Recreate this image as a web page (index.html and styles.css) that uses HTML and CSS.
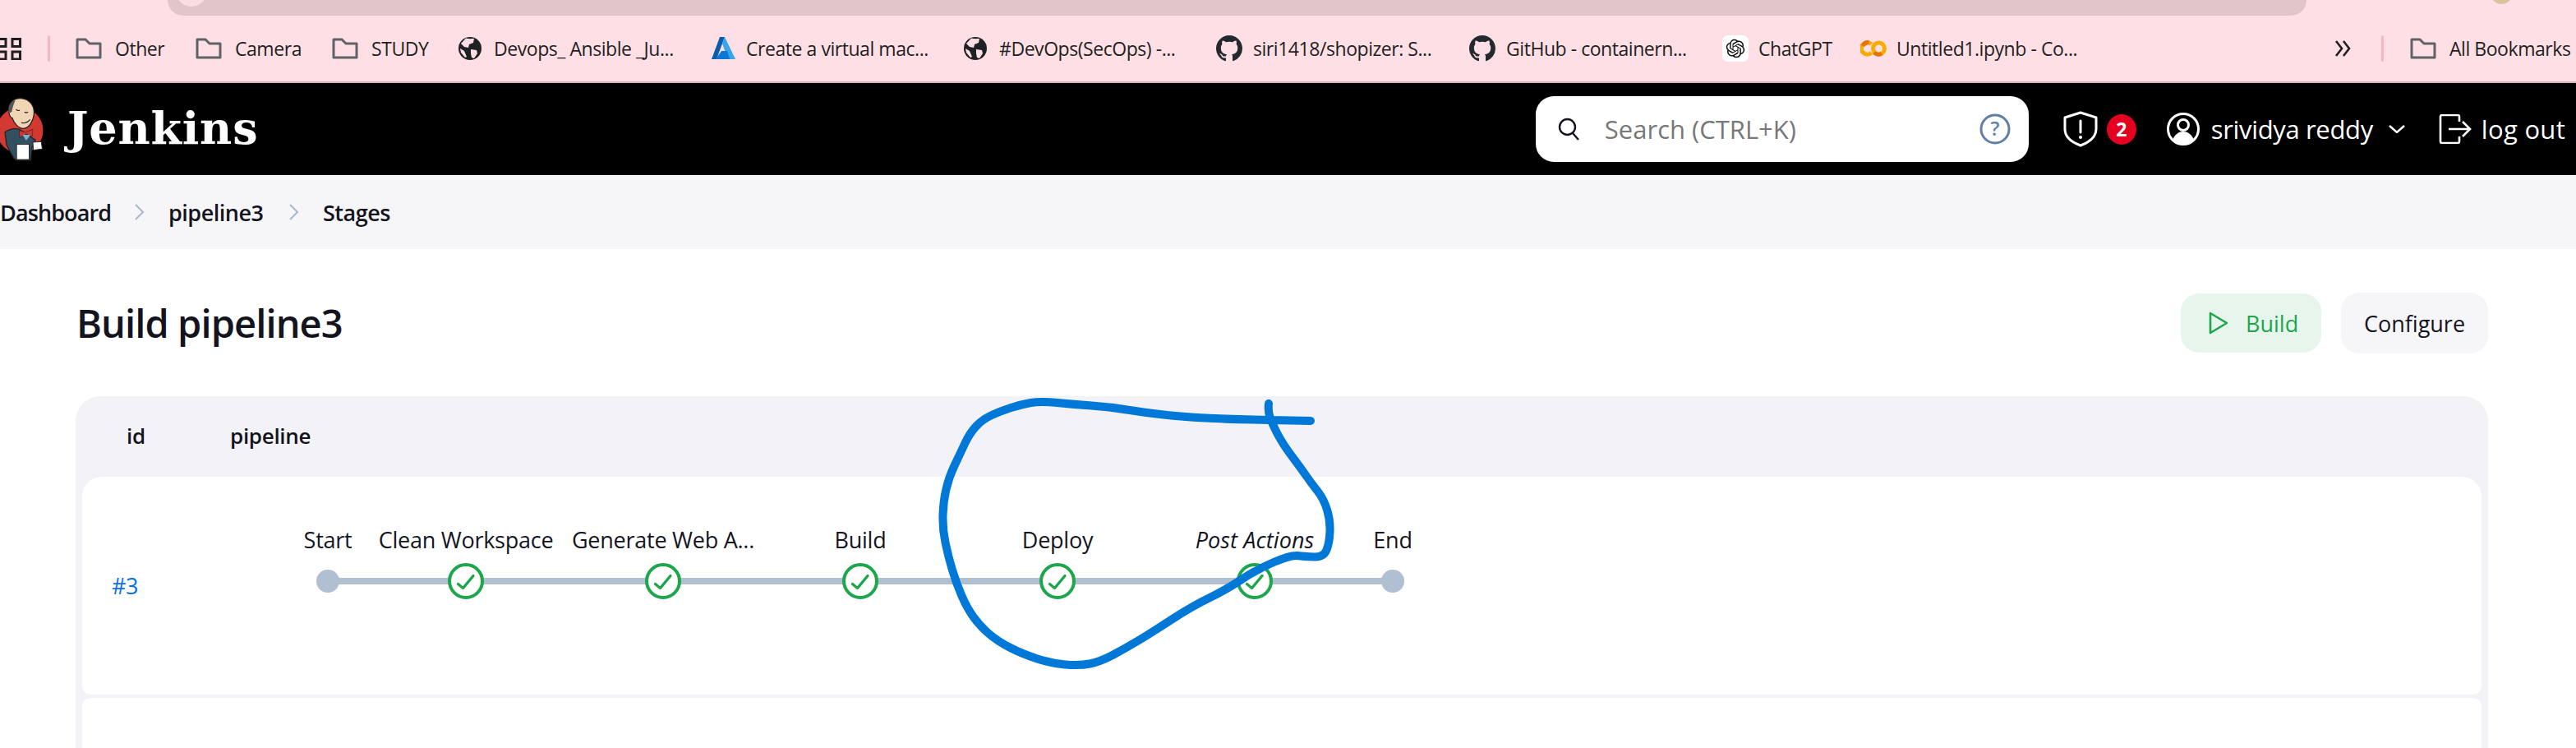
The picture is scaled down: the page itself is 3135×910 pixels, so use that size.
FILE: index.html
```html
<!DOCTYPE html>
<html lang="en">
<head>
<meta charset="utf-8">
<title>Build pipeline3 - Jenkins</title>
<link rel="stylesheet" href="styles.css">
</head>
<body>
<div class="chrome">
  <div class="omnibox"><span class="omni-dot"></span></div>
  <span class="avatar"></span>
  <nav class="bookmarks">
    <svg class="apps" viewBox="0 0 26 27"><g fill="none" stroke="#1f1f1f" stroke-width="3"><rect x="-3" y="1.5" width="10" height="9"/><rect x="15" y="1.5" width="9.500" height="9"/><rect x="-3" y="17" width="10" height="9"/><rect x="15" y="17" width="9.500" height="9"/></g></svg>
    <span class="sep"></span>
    <a class="bm"><svg class="folder" viewBox="0 0 32 26"><path d="M2 24V2h10l5 5h13v17z"/></svg><span>Other</span></a>
    <a class="bm"><svg class="folder" viewBox="0 0 32 26"><path d="M2 24V2h10l5 5h13v17z"/></svg><span>Camera</span></a>
    <a class="bm"><svg class="folder" viewBox="0 0 32 26"><path d="M2 24V2h10l5 5h13v17z"/></svg><span>STUDY</span></a>
    <a class="bm"><svg class="globe" viewBox="0 0 28 28"><circle cx="14" cy="14" r="14" fill="#202124"/><path d="M9 1.500c3 1 8 .5 10 .5l-1 5-5 2-1 4-5-1-4-4zM15 15l7 1 1 4-4 6-3-1-1-5zM2 14l5 3 3 7-2 1-5-6z" fill="#fedfe5"/></svg><span>Devops_ Ansible _Ju...</span></a>
    <a class="bm"><svg class="azure" viewBox="0 0 29 28"><path d="M10 0h6L6 27H0z" fill="#0a5cab"/><path d="M16 0l13 27h-9L13 8z" fill="#35a6e8"/><path d="M12 17h7l3 10H5z" fill="#0a78d4"/></svg><span>Create a virtual mac...</span></a>
    <a class="bm"><svg class="globe" viewBox="0 0 28 28"><circle cx="14" cy="14" r="14" fill="#202124"/><path d="M9 1.500c3 1 8 .5 10 .5l-1 5-5 2-1 4-5-1-4-4zM15 15l7 1 1 4-4 6-3-1-1-5zM2 14l5 3 3 7-2 1-5-6z" fill="#fedfe5"/></svg><span>#DevOps(SecOps) -...</span></a>
    <a class="bm"><svg class="gh" viewBox="0 0 16 16"><path d="M8 0C3.580 0 0 3.580 0 8c0 3.540 2.290 6.530 5.470 7.590.4.070.55-.17.55-.38 0-.19-.01-.82-.01-1.490-2.010.37-2.530-.49-2.690-.94-.09-.23-.48-.94-.82-1.130-.28-.15-.68-.52-.01-.53.63-.01 1.080.58 1.230.82.72 1.210 1.870.87 2.330.66.070-.52.28-.87.51-1.070-1.780-.2-3.640-.89-3.640-3.950 0-.87.31-1.590.82-2.150-.08-.2-.36-1.020.08-2.120 0 0 .67-.21 2.200.82.64-.18 1.320-.27 2-.27.68 0 1.360.09 2 .27 1.530-1.040 2.200-.82 2.200-.82.44 1.100.16 1.920.08 2.120.51.56.82 1.270.82 2.150 0 3.070-1.870 3.750-3.650 3.950.29.25.54.73.54 1.480 0 1.070-.01 1.930-.01 2.200 0 .21.15.46.55.38A8.013 8.013 0 0016 8c0-4.420-3.580-8-8-8z"/></svg><span>siri1418/shopizer: S...</span></a>
    <a class="bm"><svg class="gh" viewBox="0 0 16 16"><path d="M8 0C3.580 0 0 3.580 0 8c0 3.540 2.290 6.530 5.470 7.590.4.070.55-.17.55-.38 0-.19-.01-.82-.01-1.490-2.010.37-2.530-.49-2.690-.94-.09-.23-.48-.94-.82-1.130-.28-.15-.68-.52-.01-.53.63-.01 1.080.58 1.230.82.72 1.210 1.870.87 2.330.66.070-.52.28-.87.51-1.070-1.780-.2-3.640-.89-3.640-3.950 0-.87.31-1.590.82-2.150-.08-.2-.36-1.020.08-2.120 0 0 .67-.21 2.200.82.64-.18 1.320-.27 2-.27.68 0 1.360.09 2 .27 1.530-1.040 2.200-.82 2.200-.82.44 1.100.16 1.920.08 2.120.51.56.82 1.270.82 2.150 0 3.070-1.870 3.750-3.650 3.950.29.25.54.73.54 1.480 0 1.070-.01 1.930-.01 2.200 0 .21.15.46.55.38A8.013 8.013 0 0016 8c0-4.420-3.580-8-8-8z"/></svg><span>GitHub - containern...</span></a>
    <a class="bm"><svg class="gpt" viewBox="-5 -5 34 34"><rect x="-5" y="-5" width="34" height="34" rx="7" fill="#fff"/><path fill="#111" d="M22.2819 9.8211a5.9847 5.9847 0 0 0-.5157-4.9108 6.0462 6.0462 0 0 0-6.5098-2.9A6.0651 6.0651 0 0 0 4.9807 4.1818a5.9847 5.9847 0 0 0-3.9977 2.9 6.0462 6.0462 0 0 0 .7427 7.0966 5.98 5.98 0 0 0 .511 4.9107 6.051 6.051 0 0 0 6.5146 2.9001A5.9847 5.9847 0 0 0 13.2599 24a6.0557 6.0557 0 0 0 5.7718-4.2058 5.9894 5.9894 0 0 0 3.9977-2.9001 6.0557 6.0557 0 0 0-.7475-7.0729zm-9.022 12.6081a4.4755 4.4755 0 0 1-2.8764-1.0408l.1419-.0804 4.7783-2.7582a.7948.7948 0 0 0 .3927-.6813v-6.7369l2.02 1.1686a.071.071 0 0 1 .038.052v5.5826a4.504 4.504 0 0 1-4.4945 4.4944zm-9.6607-4.1254a4.4708 4.4708 0 0 1-.5346-3.0137l.142.0852 4.783 2.7582a.7712.7712 0 0 0 .7806 0l5.8428-3.3685v2.3324a.0804.0804 0 0 1-.0332.0615L9.74 19.9502a4.4992 4.4992 0 0 1-6.1408-1.6464zM2.3408 7.8956a4.485 4.485 0 0 1 2.3655-1.9728V11.6a.7664.7664 0 0 0 .3879.6765l5.8144 3.3543-2.0201 1.1685a.0757.0757 0 0 1-.071 0l-4.8303-2.7865A4.504 4.504 0 0 1 2.3408 7.872zm16.5963 3.8558L13.1038 8.364 15.1192 7.2a.0757.0757 0 0 1 .071 0l4.8303 2.7913a4.4944 4.4944 0 0 1-.6765 8.1042v-5.6772a.79.79 0 0 0-.407-.667zm2.0107-3.0231l-.142-.0852-4.7735-2.7818a.7759.7759 0 0 0-.7854 0L9.409 9.2297V6.8974a.0662.0662 0 0 1 .0284-.0615l4.8303-2.7866a4.4992 4.4992 0 0 1 6.6802 4.66zM8.3065 12.863l-2.02-1.1638a.0804.0804 0 0 1-.038-.0567V6.0742a4.4992 4.4992 0 0 1 7.3757-3.4537l-.142.0805L8.704 5.459a.7948.7948 0 0 0-.3927.6813zm1.0976-2.3654l2.602-1.4998 2.6069 1.4998v2.9994l-2.5974 1.4997-2.6067-1.4997Z"/></svg><span>ChatGPT</span></a>
    <a class="bm"><svg class="colab" viewBox="0 0 32 20"><g fill="none" stroke-width="5"><path d="M13.500 4.800A7.200 7.200 0 1 0 13.500 15.200" stroke="#f9ab00"/><circle cx="22.500" cy="10" r="7" stroke="#f9ab00"/><path d="M10.500 2.700A7.200 7.200 0 0 0 3 7" stroke="#e8710a"/><path d="M26 16a7 7 0 0 1-9-1" stroke="#e8710a"/></g></svg><span>Untitled1.ipynb - Co...</span></a>
    <svg class="more" viewBox="0 0 22 24"><path d="M3 3l7 9-7 9M12 3l7 9-7 9" fill="none" stroke="#1f1f1f" stroke-width="2.600"/></svg>
    <span class="sep"></span>
    <a class="bm"><svg class="folder" viewBox="0 0 32 26"><path d="M2 24V2h10l5 5h13v17z"/></svg><span>All Bookmarks</span></a>
  </nav>
</div>

<header class="jenkins-head">
  <svg class="butler" viewBox="0 75 170 250">
    <circle cx="75" cy="205" r="88" fill="#d33833"/>
    <path d="M18 212c20-14 40-15 56-10l60 40-14 30-4 46H62l-10-6-28-52z" fill="#335061" stroke="#222" stroke-width="4"/>
    <path d="M34 130c-6-30 20-50 50-46 30 4 48 30 44 62-3 22-18 52-40 52-18 0-36-20-42-40-8 0-14-14-12-28z" fill="#f0d6b5" stroke="#222" stroke-width="4"/>
    <path d="M34 140c-8-24 6-44 24-50-8 16-12 34-14 44z" fill="#55555c"/>
    <path d="M92 135q8 6 14 0M60 126q8 6 14 2M80 176q18 6 34-12" fill="none" stroke="#222" stroke-width="3.500"/>
    <path d="M72 205l24 8 28-12-2 26-24-8-24 14z" fill="#d33833" stroke="#222" stroke-width="2"/>
    <path d="M85 222l30 0-16 22z" fill="#7fb2d0"/>
    <rect x="62" y="258" width="48" height="58" fill="#fff" stroke="#222" stroke-width="3"/>
    <path d="M124 250l32-2 4 28-34 4z" fill="#fff" stroke="#222" stroke-width="3"/>
  </svg>
  <span class="wordmark">Jenkins</span>
  <div class="search">
    <svg class="search-ico" viewBox="0 0 28 28"><circle cx="12.500" cy="11.500" r="9.500" fill="none" stroke="#14141f" stroke-width="2.400"/><path d="M19 19l7 8" stroke="#14141f" stroke-width="2.400"/></svg>
    <span class="search-text">Search (CTRL+K)</span>
    <svg class="help" viewBox="0 0 38 38"><circle cx="19" cy="19" r="17" fill="none" stroke="#6080a8" stroke-width="3"/><text x="19" y="27" text-anchor="middle" class="help-q">?</text></svg>
  </div>
  <svg class="shield" viewBox="0 0 44 44"><path d="M22 2l19 6v14c0 10-8 16-19 20C11 38 3 32 3 22V8z" fill="none" stroke="#fff" stroke-width="3" stroke-linejoin="round"/><path d="M22 12v14" stroke="#fff" stroke-width="3" stroke-linecap="round"/><circle cx="22" cy="32" r="2" fill="#fff"/></svg>
  <span class="badge">2</span>
  <svg class="user" viewBox="0 0 40 40"><circle cx="20" cy="20" r="18.500" fill="none" stroke="#fff" stroke-width="3"/><circle cx="20" cy="15" r="6.500" fill="none" stroke="#fff" stroke-width="3"/><path d="M7 33c3-7 8-10 13-10s10 3 13 10c-7 7-19 7-26 0z" fill="#fff"/></svg>
  <span class="user-name">srividya reddy</span>
  <svg class="caret" viewBox="0 0 20 10"><path d="M1 1l9 8 9-8" fill="none" stroke="#fff" stroke-width="2.400"/></svg>
  <svg class="logout" viewBox="0 0 40 36"><path d="M25 9V3a2 2 0 0 0-2-2H4a2 2 0 0 0-2 2v30a2 2 0 0 0 2 2h19a2 2 0 0 0 2-2v-6" fill="none" stroke="#fff" stroke-width="2.600"/><path d="M12 18h26M29 9l9 9-9 9" fill="none" stroke="#fff" stroke-width="2.600"/></svg>
  <span class="logout-text">log out</span>
</header>

<nav class="crumbs">
  <a class="crumb-a">Dashboard</a>
  <svg class="crumb-sep" viewBox="0 0 13 20"><path d="M2 1l9 9-9 9" fill="none" stroke="#a9b8cc" stroke-width="2"/></svg>
  <a class="crumb-b">pipeline3</a>
  <svg class="crumb-sep" viewBox="0 0 13 20"><path d="M2 1l9 9-9 9" fill="none" stroke="#a9b8cc" stroke-width="2"/></svg>
  <a>Stages</a>
</nav>

<main class="content">
  <div class="title-row">
    <h1>Build pipeline3</h1>
    <div class="actions">
      <a class="btn btn-build"><svg class="play" viewBox="0 0 24 28"><path d="M2 2l20 12L2 26z" fill="none" stroke="#1ea64c" stroke-width="2.600" stroke-linejoin="round"/></svg>Build</a>
      <a class="btn btn-config">Configure</a>
    </div>
  </div>
  <section class="table">
    <div class="thead"><span class="th-id">id</span><span>pipeline</span></div>
    <div class="row">
      <a class="run-id">#3</a>
      <div class="graph">
        <span class="track"></span>
        <div class="stage edge"><span class="label">Start</span><span class="dot"></span></div>
        <div class="stage"><span class="label">Clean Workspace</span><svg class="ok" viewBox="0 0 44 44"><circle cx="22" cy="22" r="20"/><path d="M12.500 25.500l6 5 12.500-15"/></svg></div>
        <div class="stage"><span class="label">Generate Web A...</span><svg class="ok" viewBox="0 0 44 44"><circle cx="22" cy="22" r="20"/><path d="M12.500 25.500l6 5 12.500-15"/></svg></div>
        <div class="stage"><span class="label">Build</span><svg class="ok" viewBox="0 0 44 44"><circle cx="22" cy="22" r="20"/><path d="M12.500 25.500l6 5 12.500-15"/></svg></div>
        <div class="stage"><span class="label">Deploy</span><svg class="ok" viewBox="0 0 44 44"><circle cx="22" cy="22" r="20"/><path d="M12.500 25.500l6 5 12.500-15"/></svg></div>
        <div class="stage"><span class="label label-post">Post Actions</span><svg class="ok" viewBox="0 0 44 44"><circle cx="22" cy="22" r="20"/><path d="M12.500 25.500l6 5 12.500-15"/></svg></div>
        <div class="stage edge"><span class="label">End</span><span class="dot"></span></div>
      </div>
    </div>
    <div class="row row-next"></div>
  </section>
</main>

<svg class="scribble" viewBox="0 0 3135 910"><path d="M1595 512L1546 511Q1493 510 1466 508.500Q1439 507 1416 504.500Q1393 502 1371.500 498.500Q1350 495 1328.500 493.500Q1307 492 1286.500 490Q1266 488 1254.500 490Q1243 492 1230.500 496Q1218 500 1207 505Q1196 510 1188 518.500Q1180 527 1174 540Q1168 553 1161.500 566.500Q1155 580 1151.500 595Q1148 610 1147.500 626.500Q1147 643 1150.500 660Q1154 677 1159 693.500Q1164 710 1170.500 725Q1177 740 1185 751Q1193 762 1203.500 771Q1214 780 1228.500 787.500Q1243 795 1261 801Q1279 807 1296.500 808.500Q1314 810 1326.500 807.500Q1339 805 1355 796.500Q1371 788 1387.500 778Q1404 768 1427 753Q1450 738 1471.500 727.500Q1493 717 1511 705Q1529 693 1550 684Q1571 675 1579 676Q1587 677 1599 677.500Q1611 678 1614.500 669Q1618 660 1618.500 646.500Q1619 633 1615 620Q1611 607 1603.500 597.500Q1596 588 1589 578Q1582 568 1571.500 554Q1561 540 1554.500 527.500Q1548 515 1545.500 507.500Q1543 500 1544 491"/></svg>
</body>
</html>
```

FILE: styles.css
```css
* { box-sizing: border-box; }
html, body { margin: 0; padding: 0; }
body {
  position: relative;
  width: 3135px;
  height: 910px;
  overflow: hidden;
  background: #fff;
  color: #14141f;
  font-family: "Open Sans", "Noto Sans", sans-serif;
}
a { color: inherit; text-decoration: none; }

/* browser chrome */
.chrome {
  height: 101px;
  background: #fedfe5;
  border-bottom: 2px solid #d9b5bd;
}
.omnibox {
  height: 19px;
  margin: 0 328px 0 204px;
  background: #e1c5c9;
  border-radius: 0 0 26px 26px;
  padding-left: 10px;
  overflow: hidden;
}
.omni-dot {
  display: block;
  width: 38px;
  height: 38px;
  margin-top: -30px;
  border-radius: 50%;
  background: #f9dde1;
}
.avatar {
  position: absolute;
  left: 3031px;
  top: -22px;
  width: 27px;
  height: 27px;
  border-radius: 50%;
  background: #dcc29c;
}
.bookmarks {
  display: grid;
  grid-template-columns: 58px 34px 146px 166px 154px 308px 307px 307px 308px 308px 168px 576px 58px 35px 202px;
  align-items: center;
  height: 32px;
  margin-top: 24px;
  color: #1f1f1f;
  font-size: 23px;
  letter-spacing: -0.45px;
  white-space: nowrap;
}
.apps { width: 26px; height: 27px; display: block; }
.sep { display: block; width: 3px; height: 32px; background: #f7b6c2; border-radius: 2px; }
.bm { display: flex; align-items: center; height: 32px; }
.folder { width: 32px; height: 26px; margin-right: 16px; flex: none; }
.folder path { fill: none; stroke: #5f6368; stroke-width: 3; stroke-linejoin: round; }
.globe { width: 28px; height: 28px; margin-right: 15px; flex: none; }
.azure { width: 29px; height: 28px; margin-right: 13px; flex: none; }
.gh { width: 32px; height: 32px; margin-right: 13px; flex: none; fill: #24292f; }
.gpt { width: 32px; height: 32px; margin-right: 12px; flex: none; }
.colab { width: 32px; height: 20px; margin-right: 12px; flex: none; }
.more { width: 22px; height: 24px; }

/* jenkins header */
.jenkins-head {
  display: flex;
  align-items: center;
  height: 112px;
  background: #000;
  color: #fff;
  padding-right: 13px;
}
.butler { width: 55px; height: 80px; flex: none; }
.wordmark {
  margin-left: 27px;
  font-family: "DejaVu Serif", "Liberation Serif", serif;
  font-weight: 700;
  font-size: 54px;
  letter-spacing: 0.800px;
  line-height: 1;
  margin-top: -2px;
}
.search {
  display: flex;
  align-items: center;
  width: 600px;
  height: 80px;
  margin-left: auto;
  padding: 0 22px 0 26px;
  background: #fff;
  border-radius: 22px;
}
.search-ico { width: 28px; height: 28px; flex: none; }
.search-text { margin-left: 30px; font-size: 31px; color: #787878; letter-spacing: 0; white-space: nowrap; }
.help { width: 38px; height: 38px; margin-left: auto; flex: none; }
.help-q { font-size: 24px; fill: #6080a8; font-weight: 600; }
.shield { width: 44px; height: 44px; margin-left: 41px; flex: none; }
.badge {
  width: 36px;
  height: 37px;
  margin-left: 10px;
  border-radius: 50%;
  background: #e6001f;
  color: #fff;
  font-size: 23px;
  font-weight: 700;
  line-height: 37px;
  text-align: center;
}
.user { width: 40px; height: 40px; margin-left: 37px; flex: none; }
.user-name { margin-left: 14px; font-size: 31px; letter-spacing: -0.35px; white-space: nowrap; }
.caret { width: 20px; height: 10px; margin-left: 19px; flex: none; }
.logout { width: 40px; height: 36px; margin-left: 41px; flex: none; }
.logout-text { margin-left: 12px; font-size: 31px; letter-spacing: 0.3px; white-space: nowrap; }

/* breadcrumbs */
.crumbs {
  display: flex;
  align-items: center;
  height: 90px;
  background: #f6f6f8;
  font-size: 27px;
  font-weight: 600;
  letter-spacing: -0.5px;
}
.crumb-a { width: 163px; letter-spacing: -0.9px; }
.crumb-b { width: 146px; }
.crumb-sep { width: 13px; height: 20px; margin-right: 29px; flex: none; }

/* content */
.content { padding: 53px 107px 0 92px; }
.title-row { display: flex; justify-content: space-between; align-items: center; height: 74px; }
h1 { margin: 0 0 0 1px; font-size: 47px; font-weight: 600; letter-spacing: -0.9px; line-height: 1.2; }
.actions { display: flex; align-items: center; gap: 24px; }
.btn {
  display: flex;
  align-items: center;
  justify-content: center;
  border-radius: 22px;
  font-size: 27px;
  white-space: nowrap;
}
.btn-build { justify-content: flex-start; width: 171px; height: 72px; padding-left: 34px; background: #e7f5ec; color: #1ea64c; gap: 21px; }
.play { width: 24px; height: 28px; }
.btn-config { width: 179px; height: 74px; background: #f6f6f8; }

.table {
  height: 428px;
  margin-top: 52px;
  padding: 0 8px;
  background: #f2f2f7;
  border-radius: 30px 30px 0 0;
}
.thead {
  display: flex;
  align-items: center;
  height: 98px;
  padding-left: 54px;
  font-size: 26px;
  font-weight: 600;
  letter-spacing: -0.3px;
  padding-bottom: 2px;
}
.th-id { width: 126px; }
.row {
  display: flex;
  height: 265px;
  background: #fff;
  border-radius: 24px 24px 10px 10px;
}
.row-next { height: 61px; margin-top: 4px; border-radius: 10px 10px 0 0; }
.run-id {
  width: 251px;
  padding: 113px 0 0 36px;
  color: #0a6fe8;
  font-size: 27px;
  letter-spacing: -0.4px;
  line-height: 40px;
}
.graph {
  position: relative;
  display: flex;
  padding-top: 57px;
  align-self: flex-start;
}
.track {
  position: absolute;
  left: 48px;
  right: 48px;
  top: 123px;
  height: 8px;
  background: #b0bfd2;
}
.stage {
  position: relative;
  display: flex;
  flex-direction: column;
  align-items: center;
  width: 240px;
}
.edge { width: 96px; }
.label {
  height: 40px;
  margin-bottom: 8px;
  font-size: 27px;
  line-height: 40px;
  letter-spacing: -0.25px;
  white-space: nowrap;
}
.label-post { font-style: italic; letter-spacing: 0.1px; }
.dot { width: 28px; height: 28px; margin-top: 8px; border-radius: 50%; background: #b0bfd2; }
.ok { display: block; width: 44px; height: 44px; }
.ok circle { fill: #fff; stroke: #1ea64c; stroke-width: 4; }
.ok path { fill: none; stroke: #1ea64c; stroke-width: 3.400; stroke-linecap: round; stroke-linejoin: round; }

/* freehand annotation laid over the page */
.scribble { position: absolute; left: 0; top: 0; width: 3135px; height: 910px; pointer-events: none; }
.scribble path { fill: none; stroke: #0078d7; stroke-width: 10; stroke-linecap: round; stroke-linejoin: round; }
```
